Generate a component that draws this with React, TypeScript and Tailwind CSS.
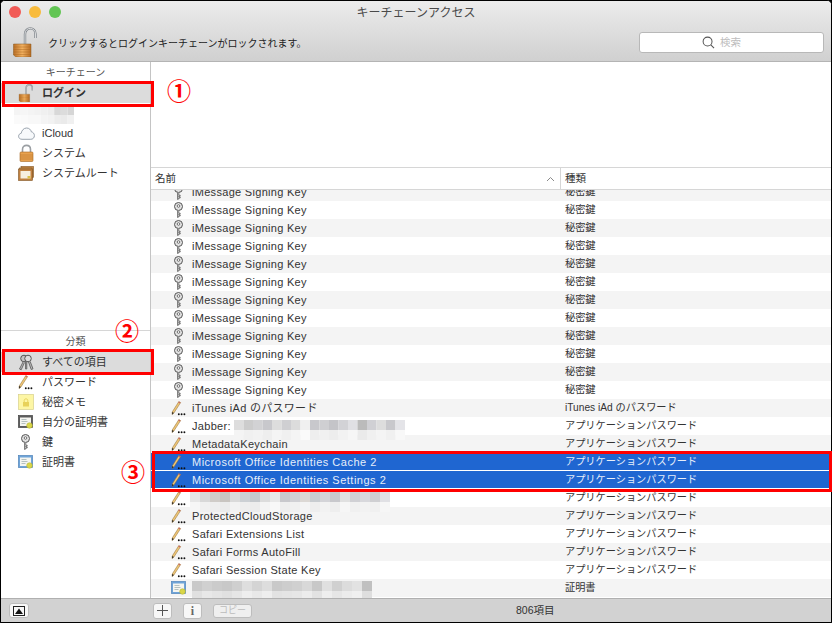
import React from 'react';

const JP = "font-['Liberation_Sans','Noto_Sans_CJK_JP',sans-serif]";

const OpenLock: React.FC<{ w: number; h: number; className?: string }> = ({ w, h, className }) => (
  <svg width={w} height={h} viewBox="0 0 24 30" className={`shrink-0 ${className ?? ''}`}>
    <defs>
      <linearGradient id="lockBody" x1="0" x2="1" y1="0" y2="0">
        <stop offset="0" stopColor="#b96f26" />
        <stop offset="0.5" stopColor="#f2b161" />
        <stop offset="1" stopColor="#b86c22" />
      </linearGradient>
    </defs>
    <path d="M12 18V7c0-7.500 10.500-7.500 10.500 0v4" fill="none" stroke="#7f858b" strokeWidth="2.400" />
    <path d="M12 18V7c0-7.500 10.500-7.500 10.500 0v4" fill="none" stroke="#f2f2f2" strokeWidth="0.800" />
    <path d="M.5 17h17.500v13H3l-2.500-2z" fill="url(#lockBody)" stroke="#8a5a20" strokeWidth="0.500" />
    <path d="M.5 20h17.500M.5 22.500h17.500M.5 25h17.500M.5 27.500h17.500" stroke="#a8641f" strokeWidth="0.600" opacity="0.7" />
  </svg>
);

const ClosedLock = () => (
  <svg width="15" height="18" viewBox="0 0 15 18" className="shrink-0 ml-[1px]">
    <path d="M3.500 9V5.500c0-5.500 8-5.500 8 0V9" fill="none" stroke="#9b9fa3" strokeWidth="1.600" />
    <rect x="1" y="8" width="13" height="9.500" rx="1" fill="#e8a24f" stroke="#a86a24" strokeWidth="0.600" />
    <path d="M1 11h13M1 13h13M1 15h13" stroke="#b8752c" strokeWidth="0.600" />
  </svg>
);

const Cloud = () => (
  <svg width="17" height="13" viewBox="0 0 17 13" className="shrink-0">
    <path d="M4 12.300C1.800 12.300.6 10.900.6 9.300c0-1.600 1.100-2.800 2.600-3C3.600 3.500 5.700 1 8.600 1c2.500 0 4.300 1.700 4.800 3.900 1.800.3 3 1.800 3 3.700 0 2.100-1.500 3.700-3.600 3.700z" fill="#f7f9fb" stroke="#8f9aa5" strokeWidth="0.900" />
  </svg>
);

const CertStack = () => (
  <svg width="16" height="15" viewBox="0 0 16 15" className="shrink-0">
    <rect x="3" y=".5" width="12.500" height="11" fill="#c98a45" stroke="#7f5424" strokeWidth="0.600" />
    <rect x="1.500" y="2" width="12.500" height="11" fill="#d49a55" stroke="#7f5424" strokeWidth="0.600" />
    <rect x=".5" y="3" width="14" height="11.500" fill="#c08040" stroke="#7f5424" strokeWidth="0.600" />
    <rect x="2.500" y="5" width="10" height="7.500" fill="#f6efe0" />
    <rect x="9.500" y="10" width="3" height="2.500" fill="#d9c04a" />
  </svg>
);

const KeyIcon = () => (
  <svg width="11" height="16" viewBox="0 0 11 16" className="shrink-0">
    <circle cx="5.500" cy="4.500" r="4" fill="#e2e2e2" stroke="#555" strokeWidth="1" />
    <circle cx="5.500" cy="4" r="1.300" fill="#fff" stroke="#555" strokeWidth="0.800" />
    <path d="M4.500 8.500v7l1.300-.5v-1h1.400v-1H5.800v-.8h1.400v-1H5.800V8.500" fill="#d0d0d0" stroke="#555" strokeWidth="0.700" />
  </svg>
);

const Keys = () => (
  <svg width="16" height="17" viewBox="0 0 16 17" className="shrink-0">
    <circle cx="6" cy="4.500" r="3.300" fill="#c4c4c4" stroke="#555" strokeWidth="1" />
    <circle cx="10" cy="4.500" r="3.300" fill="#dedede" stroke="#555" strokeWidth="1" />
    <path d="M5 8 1.500 15l1.700.8L6.500 8.500M10.500 8l2.700 7.500 1.800-.7L12.200 7.500" fill="#b8b8b8" stroke="#555" strokeWidth="0.800" />
    <path d="M7.500 8v7h1.300V8" fill="#999" stroke="#555" strokeWidth="0.700" />
  </svg>
);

const Pencil = () => (
  <svg width="16" height="15" viewBox="0 0 16 15" className="shrink-0">
    <path d="M7.800.6 9.600 1.600 2.900 12 1.100 13.600 1.200 11z" fill="#efc676" stroke="#8a6a35" strokeWidth="0.500" />
    <path d="M7.800.6 9.600 1.600 9 2.600 7.200 1.600z" fill="#c96a62" />
    <path d="M1.200 11 2.900 12 1.100 13.600z" fill="#222" />
    <circle cx="7.800" cy="13.300" r="0.950" fill="#111" />
    <circle cx="10.600" cy="13.300" r="0.950" fill="#111" />
    <circle cx="13.400" cy="13.300" r="0.950" fill="#111" />
  </svg>
);

const NoteIcon = () => (
  <svg width="16" height="16" viewBox="0 0 16 16" className="shrink-0">
    <rect x=".5" y=".5" width="15" height="15" fill="#fdf6a5" stroke="#d8d08a" strokeWidth="0.700" />
    <rect x="5" y="8" width="6" height="4.500" fill="#e8d25a" />
    <path d="M6.200 8V6.500c0-2.200 3.600-2.200 3.600 0V8" fill="none" stroke="#e8d25a" strokeWidth="1" />
  </svg>
);

const CertIcon: React.FC<{ dark?: boolean }> = ({ dark }) => (
  <svg width="15" height="14" viewBox="0 0 15 14" className="shrink-0">
    <rect x=".5" y=".5" width="14" height="12" fill={dark ? '#5c5c5c' : '#6fa4d8'} stroke={dark ? '#444' : '#4f84ba'} strokeWidth="0.700" />
    <rect x="2" y="2.500" width="11" height="8.500" fill="#f5f5f0" />
    <path d="M3.500 4.500h5M3.500 6.500h6M3.500 8.500h4" stroke="#9aa" strokeWidth="0.700" />
    <circle cx="11.500" cy="10.500" r="2.800" fill="#d9d648" stroke="#b4b030" strokeWidth="0.500" />
  </svg>
);

// mosaic that hides private names in the picture
const Mosaic: React.FC<{ cols: string[][]; w: number; h: number; className?: string }> = ({ cols, w, h, className }) => (
  <svg width={cols[0].length * w} height={cols.length * h} className={className}>
    {cols.map((row, y) =>
      row.map((c, x) => <rect key={`${x}-${y}`} x={x * w} y={y * h} width={w} height={h} fill={c} />),
    )}
  </svg>
);

const jabberMosaic = [
  ['#ddd', '#ccc', '#d2d2d4', '#c8c8cc', '#ddd', '#cfcfd2', '#dcdcdc', '#f0f0f0', '#c8c8cc', '#cfcfd2', '#c4c4c8', '#d2d2d6', '#e0e0e4', '#bbb', '#d0d0d4', '#ddd', '#c8c8cc', '#e4e4e8'],
  ['#f4f4f4', '#f0f0f0', '#f2f2f2', '#eee', '#f4f4f4', '#f0f0f0', '#f4f4f4', '#fafafa', '#eee', '#f0f0f0', '#ededed', '#f2f2f2', '#f6f6f6', '#eaeaea', '#f0f0f0', '#f4f4f4', '#f0f0f0', '#f8f8f8'],
];
const row498Mosaic = [
  ['#e6e6e6', '#d8d8d8', '#d0ccc8', '#c8c4c0', '#dadada', '#ccd0d4', '#c4c8cc', '#dcdcdc', '#e8e8e8', '#c8c8cc', '#d0d0d4', '#dcd8d4', '#c8ccd0', '#d4d4d8', '#c8c8cc', '#e0e0e0', '#d0d0d4', '#d8d8dc', '#cfcfd2', '#e0e0e4'],
  ['#f6f6f6', '#f0f0f0', '#eeeeee', '#ebebeb', '#f2f2f2', '#eeeeee', '#ececec', '#f4f4f4', '#f8f8f8', '#eeeeee', '#f0f0f0', '#f4f4f4', '#eeeeee', '#f2f2f2', '#eeeeee', '#f6f6f6', '#f0f0f0', '#f2f2f2', '#f0f0f0', '#f6f6f6'],
];
const certMosaic = [
  ['#c9c9c9', '#d0d0d0', '#cbcbcb', '#c8c8c8', '#cfcfcf', '#dedede', '#d4d4d4', '#dddddd', '#c9c9c9', '#cdcdcd', '#d0d0d0', '#d8d8d8', '#c8c8c8', '#e0e0e0', '#d0d0d0', '#dcdcdc', '#e2e2e2', '#c0c0c0'],
  ['#e0e0e0', '#e8e8e8', '#e4e4e4', '#e0e0e0', '#e6e6e6', '#eeeeee', '#e8e8e8', '#eeeeee', '#e2e2e2', '#e4e4e4', '#e6e6e6', '#ececec', '#e2e2e2', '#eeeeee', '#e6e6e6', '#ececec', '#f0f0f0', '#dedede'],
];
const sideMosaic = [
  ['#f4f4f4', '#f6f6f6', '#f4f4f4', '#f2f2f2', '#f0f0f0', '#ededed', '#d8d8d8', '#dcdcdc', '#d6d6d6'],
  ['#fafafa', '#fafafa', '#f8f8f8', '#f8f8f8', '#f4f4f4', '#f2f2f2', '#ececec', '#eaeaea', '#f0f0f0'],
];

const Section: React.FC<{ title: string; className: string; children: React.ReactNode }> = ({ title, className, children }) => (
  <div className={className}>
    <div className="h-[21px] flex items-center justify-center text-[10px] leading-none text-[#555]">{title}</div>
    {children}
  </div>
);

const SideRow: React.FC<{ icon: React.ReactNode; label: string; selected?: boolean; bold?: boolean }> = ({ icon, label, selected, bold }) => (
  <div className={`h-5 flex items-center ${selected ? 'bg-[#dcdcdc]' : ''}`}>
    <div className="w-[41px] pl-[17px] flex items-center shrink-0">{icon}</div>
    <span className={`text-[11px] leading-5 text-[#333] ${bold ? 'font-bold' : ''}`}>{label}</span>
  </div>
);

type RowKind = 'key' | 'pencil' | 'cert';
type Row = { kind: RowKind; name?: string; type: string; mosaic?: 'jabber' | 'row498' | 'cert'; prefix?: string; selected?: boolean };

const SIGN: Row = { kind: 'key', name: 'iMessage Signing Key', type: '秘密鍵' };
const APP = 'アプリケーションパスワード';
const ROWS: Row[] = [
  ...Array.from({ length: 12 }, () => SIGN),
  { kind: 'pencil', name: 'iTunes iAd のパスワード', type: 'iTunes iAd のパスワード' },
  { kind: 'pencil', prefix: 'Jabber:', mosaic: 'jabber', type: APP },
  { kind: 'pencil', name: 'MetadataKeychain', type: APP },
  { kind: 'pencil', name: 'Microsoft Office Identities Cache 2', type: APP, selected: true },
  { kind: 'pencil', name: 'Microsoft Office Identities Settings 2', type: APP, selected: true },
  { kind: 'pencil', mosaic: 'row498', type: APP },
  { kind: 'pencil', name: 'ProtectedCloudStorage', type: APP },
  { kind: 'pencil', name: 'Safari Extensions List', type: APP },
  { kind: 'pencil', name: 'Safari Forms AutoFill', type: APP },
  { kind: 'pencil', name: 'Safari Session State Key', type: APP },
  { kind: 'cert', mosaic: 'cert', type: '証明書' },
];

const ListRow: React.FC<{ row: Row; index: number }> = ({ row, index }) => {
  const bg = row.selected ? 'bg-[#1f66d1] shadow-[inset_0_-1px_0_#fff]' : index % 2 === 0 ? 'bg-[#f4f4f4]' : 'bg-white';
  const color = row.selected ? 'text-[#e6eefa]' : 'text-[#333]';
  return (
    <div className={`h-[18px] flex items-center ${bg} ${color}`}>
      <div className="w-[41px] pl-[20px] flex items-center shrink-0">
        {row.kind === 'key' ? <div className="ml-[2px]"><KeyIcon /></div> : row.kind === 'pencil' ? <Pencil /> : <CertIcon />}
      </div>
      <div className={`w-[369px] flex items-center text-[11px] whitespace-nowrap ${row.selected ? 'tracking-[0.5px]' : 'tracking-[0.3px]'}`}>
        {row.prefix && <span className="mr-[3px]">{row.prefix}</span>}
        {row.name}
        {row.mosaic === 'jabber' && <Mosaic cols={jabberMosaic} w={9.500} h={10} className="relative z-10 mt-[4px] -mb-[4px]" />}
        {row.mosaic === 'row498' && <Mosaic cols={row498Mosaic} w={10} h={10} className="relative z-10 -ml-[2px] mt-[4px] -mb-[4px]" />}
        {row.mosaic === 'cert' && <Mosaic cols={certMosaic} w={10} h={10} className="relative z-10 mt-[3px] -mb-[3px]" />}
      </div>
      <div className="pl-[4px] text-[10.200px] leading-none whitespace-nowrap">{row.type}</div>
    </div>
  );
};

const FootButton: React.FC<{ className: string; children: React.ReactNode }> = ({ className, children }) => (
  <div className={`flex items-center justify-center rounded-[3px] bg-[#f7f7f7] border border-[#bdbdbd] ${className}`}>{children}</div>
);

export default function App() {
  return (
    <div className={`w-[832px] h-[623px] bg-black relative overflow-hidden ${JP}`}>
      <div className="absolute inset-0 border border-black rounded-t-[5px] bg-white overflow-hidden flex flex-col">
        <div className="h-[61px] shrink-0 bg-gradient-to-b from-[#ececec] to-[#d0d0d0] border-b border-[#b4b4b4] flex flex-col">
          <div className="h-[24px] relative flex items-center justify-center shrink-0">
            <div className="absolute left-[8px] top-[5px] flex gap-[8px]">
              <span className="w-3 h-3 rounded-full bg-[#f15b57]" />
              <span className="w-3 h-3 rounded-full bg-[#f8bb3c]" />
              <span className="w-3 h-3 rounded-full bg-[#62c554]" />
            </div>
            <span className="text-[12px] text-[#4a4a4a]">キーチェーンアクセス</span>
          </div>
          <div className="flex-1 flex items-start pl-[12px] pr-[7px]">
            <OpenLock w={24} h={30} className="mt-[2px]" />
            <span className="ml-[11px] mt-[14px] text-[10px] leading-none text-[#222]">クリックするとログインキーチェーンがロックされます。</span>
            <div className="ml-auto mt-[7px] w-[185px] h-[21px] bg-white rounded-[3px] border border-[#b8b8b8] flex items-center justify-center gap-[3px] pr-[20px]">
              <svg width="13" height="13" viewBox="0 0 14 14" fill="none" stroke="#555" strokeWidth="1.100">
                <circle cx="6" cy="6" r="4.800" />
                <path d="m9.500 9.500 3.500 3.500" />
              </svg>
              <span className="text-[10.500px] text-[#bdbdbd] ml-[2px]">検索</span>
            </div>
          </div>
        </div>

        <div className="flex-1 flex min-h-0">
          <div className="w-[150px] shrink-0 border-r border-[#c4c4c4] flex flex-col">
            <Section title="キーチェーン" className="h-[269px] border-b border-[#d6d6d6]">
              <SideRow icon={<OpenLock w={16} h={18} />} label="ログイン" selected bold />
              <div className="h-5 pl-[13px] pt-[3px]">
                <Mosaic cols={sideMosaic} w={6.700} h={9} />
              </div>
              <SideRow icon={<Cloud />} label="iCloud" />
              <SideRow icon={<ClosedLock />} label="システム" />
              <SideRow icon={<CertStack />} label="システムルート" />
            </Section>
            <Section title="分類" className="flex-1">
              <SideRow icon={<Keys />} label="すべての項目" selected />
              <SideRow icon={<Pencil />} label="パスワード" />
              <SideRow icon={<NoteIcon />} label="秘密メモ" />
              <SideRow icon={<CertIcon dark />} label="自分の証明書" />
              <SideRow icon={<div className="ml-[2px]"><KeyIcon /></div>} label="鍵" />
              <SideRow icon={<CertIcon />} label="証明書" />
            </Section>
          </div>

          <div className="flex-1 min-w-0 flex flex-col">
            <div className="h-[105px] shrink-0 bg-white" />
            <div className="h-[23px] shrink-0 bg-white border-y border-[#d6d6d6] flex items-center text-[10.500px] text-[#333]">
              <div className="w-[410px] h-full pl-[4px] pr-[5px] flex items-center justify-between border-r border-[#d6d6d6]">
                <span>名前</span>
                <svg width="9" height="6" viewBox="0 0 9 6" fill="none" stroke="#8a8a8a" strokeWidth="1">
                  <path d="M1 5l3.500-3.500L8 5" />
                </svg>
              </div>
              <span className="pl-[4px]">種類</span>
            </div>
            <div className="flex-1 min-h-0 overflow-hidden">
              <div className="-mt-[7px]">
                {ROWS.map((row, i) => (
                  <ListRow key={i} row={row} index={i} />
                ))}
              </div>
            </div>
          </div>
        </div>

        <div className="h-[24px] shrink-0 bg-[#d2d2d2] border-t border-[#b0b0b0] flex items-center text-[10.500px] text-[#333]">
          <FootButton className="ml-[8px] w-[20px] h-[15px]">
            <svg width="12" height="10" viewBox="0 0 12 10">
              <rect x=".5" y=".5" width="11" height="9" fill="none" stroke="#222" />
              <path d="M2 8l4-5.500L10 8z" fill="#111" />
            </svg>
          </FootButton>
          <FootButton className="ml-[124px] w-[19px] h-[16px]">
            <svg width="11" height="11" viewBox="0 0 11 11" stroke="#555" strokeWidth="1">
              <path d="M5.500 0v11M0 5.500h11" />
            </svg>
          </FootButton>
          <FootButton className="ml-[11px] w-[19px] h-[16px] font-['Liberation_Serif'] font-bold text-[#666] text-[12px]">i</FootButton>
          <FootButton className="ml-[11px] w-[39px] h-[14px] text-[9px] text-[#bbb] !bg-[#efefef]">コピー</FootButton>
          <span className="ml-[264px]">806項目</span>
        </div>
      </div>

      <div className="absolute left-[2px] top-[81px] w-[152px] h-[26px] border-[3px] border-[#f00]" />
      <div className="absolute left-[2px] top-[349px] w-[152px] h-[26px] border-[3px] border-[#f00]" />
      <div className="absolute left-[152px] top-[451px] w-[680px] h-[41px] border-[3px] border-[#f00]" />
      <span className="absolute left-[167px] top-[74px] text-[24px] leading-[36px] font-bold text-[#f00]">①</span>
      <span className="absolute left-[115px] top-[314px] text-[24px] leading-[36px] font-bold text-[#f00]">②</span>
      <span className="absolute left-[121px] top-[455px] text-[24px] leading-[36px] font-bold text-[#f00]">③</span>
    </div>
  );
}
